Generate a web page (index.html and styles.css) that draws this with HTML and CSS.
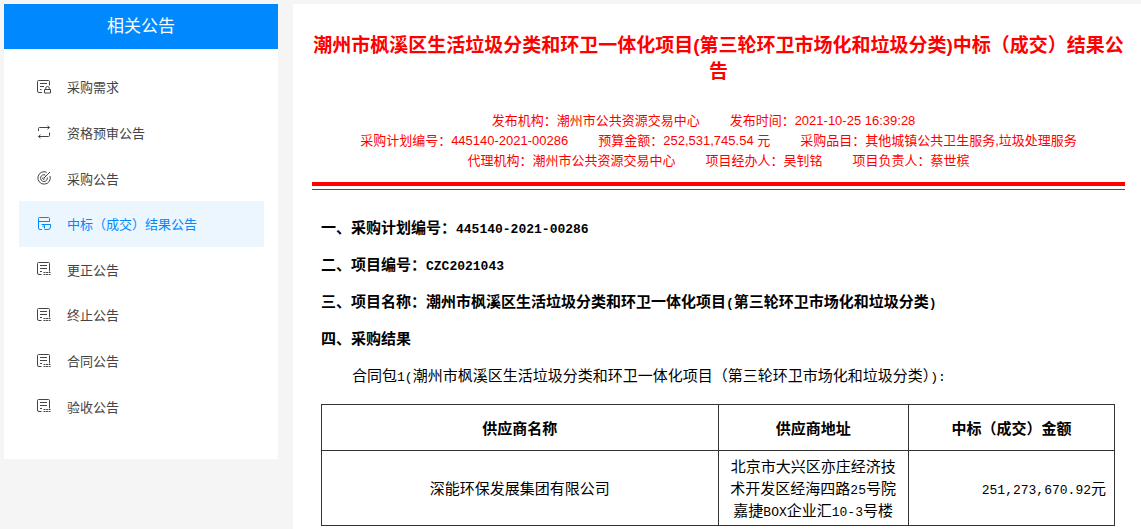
FILE: index.html
```html
<!DOCTYPE html>
<html lang="zh-CN">
<head>
  <meta charset="UTF-8" />
  <title>中标（成交）结果公告</title>
  <link rel="stylesheet" href="styles.css">
</head>
<body>
  <!-- shared icon shapes -->
  <svg class="sprite" aria-hidden="true">
    <symbol id="icon-need" viewBox="0 0 14 14">
      <path d="M5 12.5H2a1.5 1.5 0 0 1-1.5-1.5V1.5a1 1 0 0 1 1-1h10a1 1 0 0 1 1 1v4M3 3.5h7M3 6.5h4M3 9.5h1.5M7.5 9.5h6v3.5h-6zM8.7 9.5V8.3a1.8 1.8 0 0 1 3.6 0v1.2" />
    </symbol>
    <symbol id="icon-loop" viewBox="0 0 14 14">
      <path d="M1.5 6V3.5a1 1 0 0 1 1-1h10M10.5.8l2 1.7-2 1.7M12.5 7.5v3a1 1 0 0 1-1 1h-10M3.5 9.8l-2 1.7 2 1.7" />
    </symbol>
    <symbol id="icon-target" viewBox="0 0 14 14">
      <path d="M9.7 1.3A6.2 6.2 0 1 0 13 5M8.5 4.1A3.4 3.4 0 1 0 10.3 6.5M6.8 7.2L13 1M6.2 6.3a1.1 1.1 0 1 0 1.5 1.5" />
    </symbol>
    <symbol id="icon-result" viewBox="0 0 14 14">
      <path d="M12.5 4.5v-3a1 1 0 0 0-1-1h-9a1 1 0 0 0-1 1V11A1.5 1.5 0 0 0 3 12.5h2M1.5 4.5h11M4.5 7.5h9V10a2.5 2.5 0 0 1-2.5 2.5H7.5M5.5 9.5l2-1v3" />
    </symbol>
    <symbol id="icon-doc" viewBox="0 0 14 14">
      <path d="M4.5 12.5H2A1.5 1.5 0 0 1 .5 11V1.5a1 1 0 0 1 1-1h10a1 1 0 0 1 1 1v8M3 3.5h7M3 6.5h7M3 9.5h2" />
      <path d="M6.5 10.5h7M6.5 12.5h7" stroke-dasharray="2 .6" />
    </symbol>
  </svg>

  <div class="page">
    <aside class="sidebar">
      <h2 class="sidebar-title">相关公告</h2>
      <nav class="menu">
        <a href="#"><svg><use href="#icon-need" /></svg>采购需求</a>
        <a href="#"><svg><use href="#icon-loop" /></svg>资格预审公告</a>
        <a href="#"><svg><use href="#icon-target" /></svg>采购公告</a>
        <a href="#" class="active"><svg><use href="#icon-result" /></svg>中标（成交）结果公告</a>
        <a href="#"><svg><use href="#icon-doc" /></svg>更正公告</a>
        <a href="#"><svg><use href="#icon-doc" /></svg>终止公告</a>
        <a href="#"><svg><use href="#icon-doc" /></svg>合同公告</a>
        <a href="#"><svg><use href="#icon-doc" /></svg>验收公告</a>
      </nav>
    </aside>

    <main class="notice">
      <h1>潮州市枫溪区生活垃圾分类和环卫一体化项目(第三轮环卫市场化和垃圾分类)中标（成交）结果公告</h1>
      <div class="meta">
        <div class="meta-row meta-publish">
          <span>发布机构：潮州市公共资源交易中心</span>
          <span>发布时间：2021-10-25 16:39:28</span>
        </div>
        <div class="meta-row">
          <span>采购计划编号：445140-2021-00286</span>
          <span>预算金额：252,531,745.54 元</span>
          <span>采购品目：其他城镇公共卫生服务,垃圾处理服务</span>
        </div>
        <div class="meta-row">
          <span>代理机构：潮州市公共资源交易中心</span>
          <span>项目经办人：吴钊铭</span>
          <span>项目负责人：蔡世槟</span>
        </div>
      </div>
      <div class="rule"></div>

      <div class="content">
        <h3>一、采购计划编号：<span class="num">445140-2021-00286</span></h3>
        <h3>二、项目编号：<span class="num">CZC2021043</span></h3>
        <h3>三、项目名称：潮州市枫溪区生活垃圾分类和环卫一体化项目<span class="num">(</span>第三轮环卫市场化和垃圾分类<span class="num">)</span></h3>
        <h3>四、采购结果</h3>
        <p>合同包<span class="num">1(</span>潮州市枫溪区生活垃圾分类和环卫一体化项目（第三轮环卫市场化和垃圾分类）<span class="num">):</span></p>

        <table>
          <thead>
            <tr>
              <th class="col-name">供应商名称</th>
              <th class="col-address">供应商地址</th>
              <th class="col-amount">中标（成交）金额</th>
            </tr>
          </thead>
          <tbody>
            <tr>
              <td>深能环保发展集团有限公司</td>
              <td>北京市大兴区亦庄经济技术开发区经海四路<span class="num">25</span>号院嘉捷<span class="num">BOX</span>企业汇<span class="num">10-3</span>号楼</td>
              <td class="amount"><span class="num">251,273,670.92</span>元</td>
            </tr>
          </tbody>
        </table>
      </div>
    </main>
  </div>
</body>
</html>
```
FILE: styles.css
```css
* {
  box-sizing: border-box;
}
body {
  margin: 0;
  background-color: #f5f5f5;
  font-family: "Liberation Sans", "Noto Sans CJK SC", sans-serif;
}
h1, h2, h3, p {
  margin: 0;
}
.sprite {
  display: none;
}
.page {
  display: flex;
  align-items: flex-start;
  gap: 15px;
  padding: 4px 0 0 4px;
}

/* sidebar */
.sidebar {
  flex: none;
  width: 274px;
  padding-bottom: 30px;
  background-color: #fff;
}
.sidebar-title {
  background-color: #0089ff;
  color: #fff;
  font-size: 17px;
  font-weight: 400;
  line-height: 45px;
  text-align: center;
}
.menu {
  display: grid;
  grid-auto-rows: 1fr;
  min-height: 365px;
  margin: 15px 14px 0 15px;
}
.menu a {
  display: flex;
  align-items: center;
  gap: 16px;
  padding-left: 18px;
  color: #444;
  font-size: 13px;
  text-decoration: none;
}
.menu svg {
  width: 14px;
  height: 14px;
  fill: none;
  stroke: currentColor;
  stroke-width: 1;
}
.menu a.active {
  background-color: #ebf6ff;
  color: #0089ff;
}

/* notice */
.notice {
  flex: 1;
  min-height: calc(100vh - 4px);
  padding: 29px 16px 3px 19px;
  background-color: #fff;
}
.notice h1 {
  color: #f00;
  font-size: 19px;
  line-height: 26px;
  text-align: center;
}
.meta {
  margin-top: 26px;
  color: #f00;
  font-size: 13px;
  line-height: 20px;
}
.meta-row {
  display: flex;
  justify-content: center;
  gap: 30px;
}
.meta-publish {
  padding-right: 30px;
}
.rule {
  height: 8px;
  margin-top: 11px;
  border-top: 4px solid #f00;
  border-bottom: 1px solid #f00;
}
.content {
  padding: 18px 10px 0 9px;
  font-family: "Noto Sans CJK SC", sans-serif;
  font-size: 15px;
  color: #000;
}
.content h3,
.content p {
  font-size: 15px;
  line-height: 37px;
}
.content p {
  padding-left: 31px;
}
.content .num {
  font-family: "Liberation Mono", monospace;
  font-size: 13px;
  line-height: 1;
}
table {
  width: 100%;
  margin-top: 11px;
  border-collapse: collapse;
  table-layout: fixed;
}
th, td {
  padding: 4px 8px;
  border: 1px solid #333;
  line-height: 22px;
  text-align: center;
}
th {
  height: 46px;
}
.col-name {
  width: 50%;
}
.col-address {
  width: 24%;
}
.col-amount {
  width: 26%;
}
td.amount {
  text-align: right;
}
```
